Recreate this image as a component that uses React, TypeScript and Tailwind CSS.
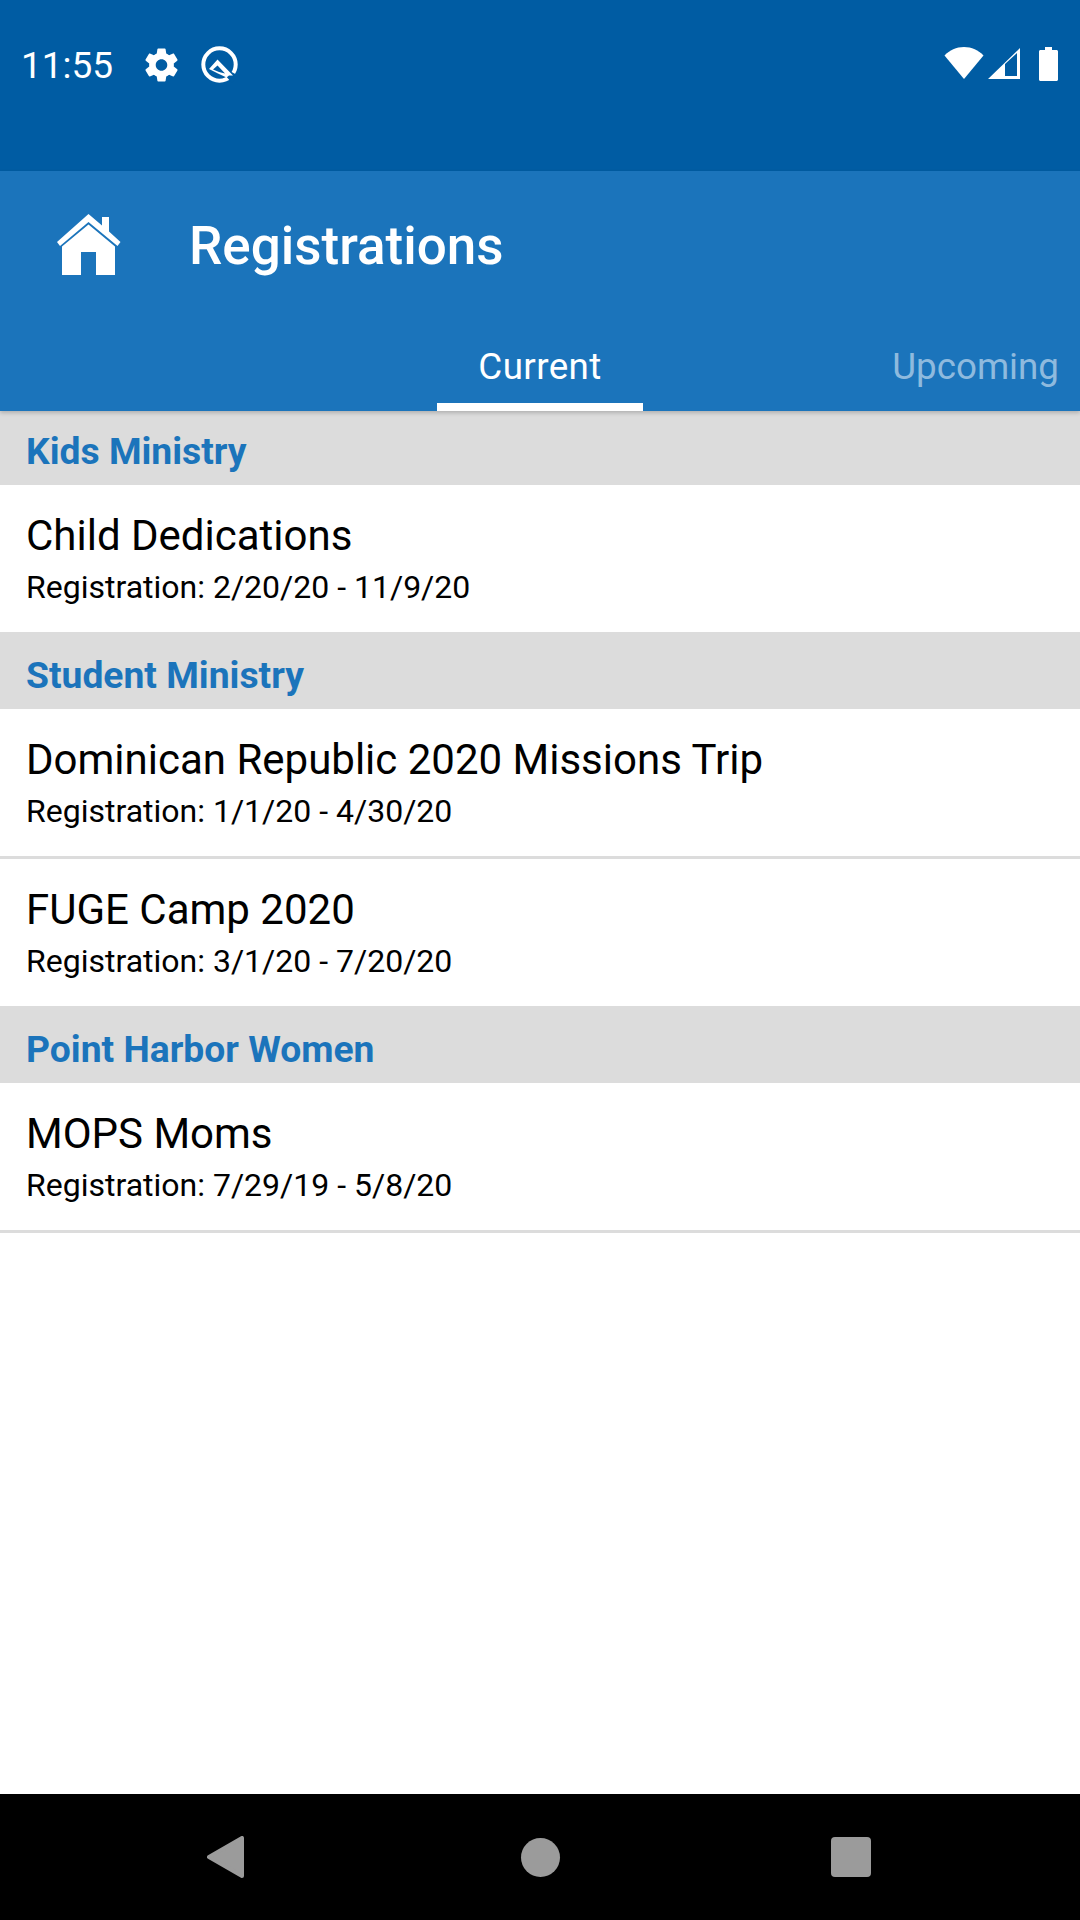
import React from 'react';

type Item = { title: string; dates: string; divider?: boolean };
type Section = { name: string; items: Item[] };

const sections: Section[] = [
  {
    name: 'Kids Ministry',
    items: [{ title: 'Child Dedications', dates: 'Registration: 2/20/20 - 11/9/20' }],
  },
  {
    name: 'Student Ministry',
    items: [
      { title: 'Dominican Republic 2020 Missions Trip', dates: 'Registration: 1/1/20 - 4/30/20', divider: true },
      { title: 'FUGE Camp 2020', dates: 'Registration: 3/1/20 - 7/20/20' },
    ],
  },
  {
    name: 'Point Harbor Women',
    items: [{ title: 'MOPS Moms', dates: 'Registration: 7/29/19 - 5/8/20', divider: true }],
  },
];

function GearIcon() {
  return (
    <svg width="33" height="34" viewBox="2 1.8 20 20.4" fill="white">
      <path d="M19.43 12.98c.04-.32.07-.64.07-.98s-.03-.66-.07-.98l2.11-1.65c.19-.15.24-.42.12-.64l-2-3.46c-.12-.22-.39-.3-.61-.22l-2.49 1c-.52-.4-1.08-.73-1.69-.98l-.38-2.65C14.46 2.18 14.25 2 14 2h-4c-.25 0-.46.18-.49.42l-.38 2.65c-.61.25-1.17.59-1.69.98l-2.49-1c-.23-.09-.49 0-.61.22l-2 3.46c-.13.22-.07.49.12.64l2.11 1.65c-.04.32-.07.65-.07.98s.03.66.07.98l-2.11 1.65c-.19.15-.24.42-.12.64l2 3.46c.12.22.39.3.61.22l2.49-1c.52.4 1.08.73 1.69.98l.38 2.65c.03.24.24.42.49.42h4c.25 0 .46-.18.49-.42l.38-2.65c.61-.25 1.17-.59 1.69-.98l2.49 1c.23.09.49 0 .61-.22l2-3.46c.12-.22.07-.49-.12-.64l-2.11-1.65zM12 15.5c-1.93 0-3.5-1.57-3.5-3.5s1.57-3.5 3.5-3.5 3.5 1.57 3.5 3.5-1.57 3.5-3.5 3.5z" />
    </svg>
  );
}

function QIcon() {
  return (
    <svg width="37" height="37" viewBox="0 0 37 37" fill="none">
      <circle cx="18.5" cy="18.5" r="16.2" stroke="white" strokeWidth="4" />
      <path d="M23 28L27 24L37 29.5L31 37Z" fill="#005ca3" />
      <path d="M16.5 13.5L32 29.5H28L25.5 31.5L17 27.5L8 23Z" fill="white" />
      <path d="M16.5 19.5L24 27.5L18 26L12 23.5Z" fill="#005ca3" />
    </svg>
  );
}

function WifiIcon() {
  return (
    <svg width="40" height="32" viewBox="0 0 40 32" fill="white">
      <path d="M20 32L0.5 8.5C5.5 3.2 12.4 0 20 0S34.5 3.2 39.5 8.5Z" />
    </svg>
  );
}

function SignalIcon() {
  return (
    <svg width="32" height="31" viewBox="0 0 32 31" fill="white">
      <path fillRule="evenodd" d="M0 31L32 0V31ZM17 16L29 5V28H17Z" />
    </svg>
  );
}

function BatteryIcon() {
  return (
    <svg width="19" height="34" viewBox="0 0 19 34" fill="white">
      <path d="M6 0H13V3H17.5C18.3 3 19 3.7 19 4.5V32.5C19 33.3 18.3 34 17.5 34H1.5C.7 34 0 33.3 0 32.5V4.5C0 3.7 .7 3 1.5 3H6Z" />
    </svg>
  );
}

function HomeIcon() {
  return (
    <svg width="64" height="61" viewBox="0 0 64 61" fill="white">
      <path d="M31.5 0L45 11.5V3H52V17.5L63.5 28L60.5 32L31.5 8L3 32L0 28Z" />
      <path d="M31.5 10.5L58 32.5V61H39V38H24V61H5V32.5Z" />
    </svg>
  );
}

function BackIcon() {
  return (
    <svg width="37" height="42" viewBox="0 0 37 42" fill="#9b9b9b">
      <path d="M2 21L35 2V40Z" stroke="#9b9b9b" strokeWidth="4" strokeLinejoin="round" />
    </svg>
  );
}

export default function App() {
  return (
    <div className="w-[1080px] h-[1920px] flex flex-col bg-white [font-family:Roboto,sans-serif]">
      {/* status bar */}
      <div className="h-[171px] shrink-0 bg-[#005ca3] pt-[46px] pl-[21px] pr-[22px] flex items-start text-white">
        <span className="mt-[1px] text-[37px] leading-[38px] w-[124px]">11:55</span>
        <div className="mt-[2px]"><GearIcon /></div>
        <div className="ml-[23px]"><QIcon /></div>
        <div className="ml-auto flex items-start pt-[1px]">
          <WifiIcon />
          <div className="ml-[4px] mt-[1px]"><SignalIcon /></div>
          <div className="ml-[19px]"><BatteryIcon /></div>
        </div>
      </div>

      {/* toolbar + tabs */}
      <div className="h-[240px] shrink-0 relative z-10 bg-[#1b74bb] shadow-[0_2px_4px_rgba(0,0,0,0.2)] flex flex-col">
        <div className="h-[150px] flex items-center pl-[57px]">
          <div className="mt-[-3px]"><HomeIcon /></div>
          <h1 className="ml-[68px] text-[53px] leading-[62px] font-medium text-white">Registrations</h1>
        </div>
        <div className="h-[90px] flex">
          <div className="w-[437px]" />
          <div className="w-[206px] pt-[24px] border-b-[8px] border-white text-center text-[36.75px] leading-[43px] tracking-[0.4px] text-white">
            Current
          </div>
          <div className="flex-1 pt-[24px] pr-[21px] text-right text-[36.75px] leading-[43px] text-[#8ebade]">
            Upcoming
          </div>
        </div>
      </div>

      {/* registrations list */}
      <div className="flex-1 -mt-[3px]">
        {sections.map((section) => (
          <div key={section.name}>
            <div className="h-[77px] bg-[#dcdcdc] pl-[26px] pt-[22px] text-[37.25px] leading-[43px] font-bold text-[#1b74bb]">
              {section.name}
            </div>
            {section.items.map((item) => (
              <div
                key={item.title}
                className={item.divider ? 'h-[150px] pl-[26px] pt-[26px] border-b-[3px] border-[#dcdcdc]' : 'h-[147px] pl-[26px] pt-[26px]'}
              >
                <div className="text-[42px] leading-[49px] text-black">{item.title}</div>
                <div className="mt-[9px] text-[32px] leading-[37px] text-black">{item.dates}</div>
              </div>
            ))}
          </div>
        ))}
      </div>

      {/* nav bar */}
      <div className="h-[126px] shrink-0 bg-black flex items-center pl-[207px]">
        <BackIcon />
        <div className="ml-[277px] w-[39px] h-[39px] rounded-full bg-[#9b9b9b]" />
        <div className="ml-[271px] w-[40px] h-[40px] rounded-[4px] bg-[#9b9b9b]" />
      </div>
    </div>
  );
}
